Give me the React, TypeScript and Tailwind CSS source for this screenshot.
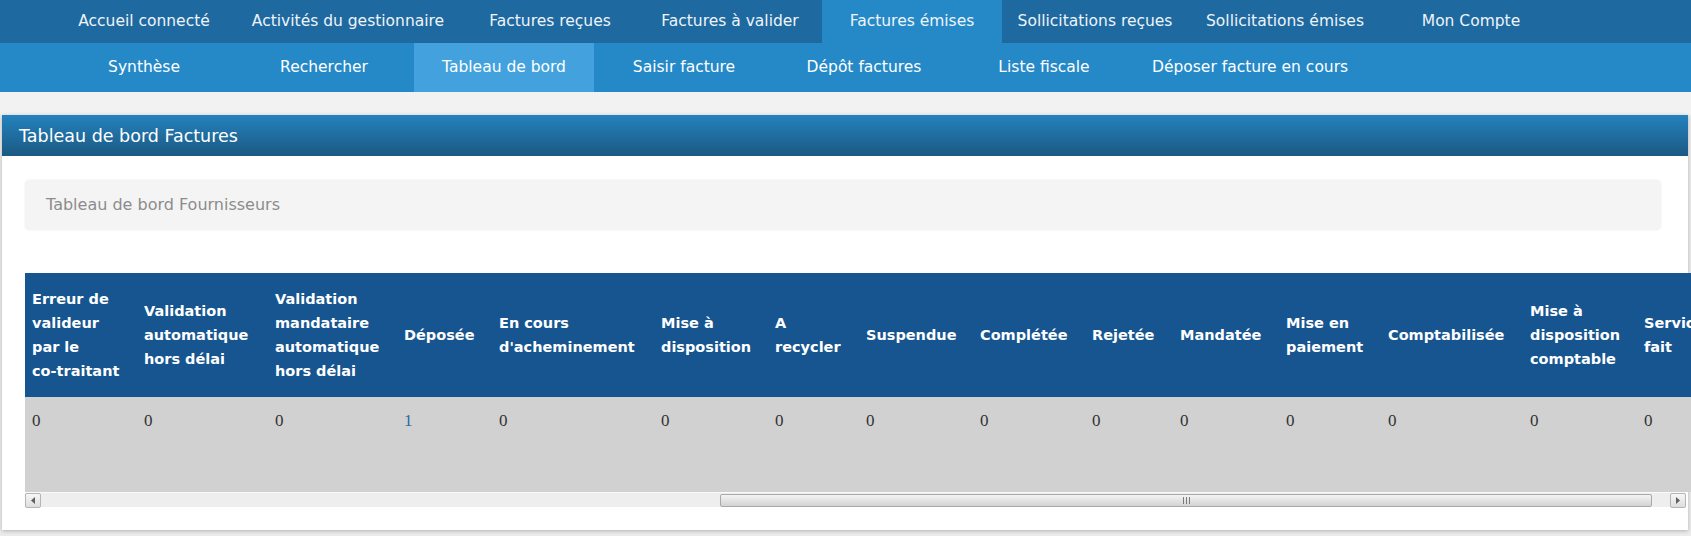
import React from 'react';

const topItems = [
  { label: 'Accueil connecté', w: 'w-[180px]' },
  { label: 'Activités du gestionnaire', w: 'w-[228px]' },
  { label: 'Factures reçues', w: 'w-[176px]' },
  { label: 'Factures à valider', w: 'w-[184px]' },
  { label: 'Factures émises', w: 'w-[180px]', active: true },
  { label: 'Sollicitations reçues', w: 'w-[186px]' },
  { label: 'Sollicitations émises', w: 'w-[194px]' },
  { label: 'Mon Compte', w: 'w-[178px]' },
];

const subItems = [
  { label: 'Synthèse', w: 'w-[180px]' },
  { label: 'Rechercher', w: 'w-[180px]' },
  { label: 'Tableau de bord', w: 'w-[180px]', active: true },
  { label: 'Saisir facture', w: 'w-[180px]' },
  { label: 'Dépôt factures', w: 'w-[180px]' },
  { label: 'Liste fiscale', w: 'w-[180px]' },
  { label: 'Déposer facture en cours', w: 'px-[18px]' },
];

// header lines are broken by hand so they wrap like the original page
const columns = [
  { lines: ['Erreur de', 'valideur', 'par le', 'co-traitant'], w: 'w-[112px]', value: '0' },
  { lines: ['Validation', 'automatique', 'hors délai'], w: 'w-[131px]', value: '0' },
  { lines: ['Validation', 'mandataire', 'automatique', 'hors délai'], w: 'w-[129px]', value: '0' },
  { lines: ['Déposée'], w: 'w-[95px]', value: '1', link: true },
  { lines: ['En cours', "d'acheminement"], w: 'w-[162px]', value: '0' },
  { lines: ['Mise à', 'disposition'], w: 'w-[114px]', value: '0' },
  { lines: ['A', 'recycler'], w: 'w-[91px]', value: '0' },
  { lines: ['Suspendue'], w: 'w-[114px]', value: '0' },
  { lines: ['Complétée'], w: 'w-[112px]', value: '0' },
  { lines: ['Rejetée'], w: 'w-[88px]', value: '0' },
  { lines: ['Mandatée'], w: 'w-[106px]', value: '0' },
  { lines: ['Mise en', 'paiement'], w: 'w-[102px]', value: '0' },
  { lines: ['Comptabilisée'], w: 'w-[142px]', value: '0' },
  { lines: ['Mise à', 'disposition', 'comptable'], w: 'w-[114px]', value: '0' },
  { lines: ['Service', 'fait'], w: 'w-[110px]', value: '0' },
];

function ScrollArrow({ dir }: { dir: 'left' | 'right' }) {
  return (
    <div className="w-[16px] h-[15px] shrink-0 border border-[#b5b5b5] bg-gradient-to-b from-[#f7f7f7] to-[#dedede] rounded-[2px] flex items-center justify-center">
      <svg width="4" height="7" viewBox="0 0 4 7">
        {dir === 'left' ? <path d="M4 0 L0 3.5 L4 7 Z" fill="#606060" /> : <path d="M0 0 L4 3.5 L0 7 Z" fill="#606060" />}
      </svg>
    </div>
  );
}

export default function App() {
  return (
    <div className="w-full h-[536px] overflow-hidden bg-[#ececec] font-['DejaVu_Sans',sans-serif]">
      <nav className="h-[43px] bg-[#1e69a0] flex pl-[54px]">
        {topItems.map((item) => (
          <div
            key={item.label}
            className={`${item.w} shrink-0 h-full flex items-center justify-center whitespace-nowrap text-[15.5px] text-[#eef4f9] ${item.active ? 'bg-[#2589c8]' : ''}`}
          >
            {item.label}
          </div>
        ))}
      </nav>
      <nav className="h-[49px] bg-[#2589c8] flex pl-[54px]">
        {subItems.map((item) => (
          <div
            key={item.label}
            className={`${item.w} shrink-0 h-full flex items-center justify-center whitespace-nowrap text-[15.5px] text-white ${item.active ? 'bg-[#43a2de]' : ''}`}
          >
            {item.label}
          </div>
        ))}
      </nav>

      <div className="h-[23px] bg-[#f2f2f2]" />

      <section className="ml-[2px] mr-[3px] bg-white shadow-[0_1px_4px_rgba(0,0,0,0.25)]">
        <div className="h-[41px] bg-gradient-to-b from-[#2482be] to-[#1b5983] flex items-center pl-[17px] pt-[2px] text-[17.5px] text-white">
          Tableau de bord Factures
        </div>
        <div className="pl-[23px] pr-[2px] pt-[24px] pb-[23px]">
          <div className="mr-[25px] h-[50px] rounded-[5px] bg-[#f4f4f4] shadow-[0_0_2px_rgba(0,0,0,0.1)] flex items-center pl-[21px] text-[16px] text-[#8c8c8c]">
            Tableau de bord Fournisseurs
          </div>

          <div className="mt-[43px]">
            <table className="table-fixed border-collapse w-[1722px]">
              <thead>
                <tr className="h-[124px] bg-[#16558f]">
                  {columns.map((c, i) => (
                    <th
                      key={i}
                      className={`${c.w} pl-[7px] pr-[4px] text-left align-middle font-bold text-[14.5px] leading-[24px] text-white whitespace-nowrap`}
                    >
                      {c.lines.map((l, j) => (
                        <div key={j}>{l}</div>
                      ))}
                    </th>
                  ))}
                </tr>
              </thead>
              <tbody>
                <tr className="h-[95px] bg-[#d1d1d1]">
                  {columns.map((c, i) => (
                    <td
                      key={i}
                      className={`pl-[7px] pt-[12px] align-top font-['Liberation_Serif',serif] text-[17px] leading-[24px] ${c.link ? 'text-[#2b6aa3]' : 'text-[#333333]'}`}
                    >
                      {c.value}
                    </td>
                  ))}
                </tr>
              </tbody>
            </table>

            <div className="h-[15px] flex items-center bg-[#eeeeee] border-t border-[#fafafa]">
              <ScrollArrow dir="left" />
              <div className="flex-1 h-full flex items-center pl-[679px] pr-[18px]">
                <div className="flex-1 h-[13px] rounded-[2px] border border-[#a9a9a9] bg-gradient-to-b from-[#f4f4f4] to-[#d3d3d3] flex items-center justify-center">
                  <svg width="7" height="7" viewBox="0 0 7 7">
                    <path d="M0.5 0 V7 M3.5 0 V7 M6.5 0 V7" stroke="#7a7a7a" strokeWidth="1" />
                  </svg>
                </div>
              </div>
              <ScrollArrow dir="right" />
            </div>
          </div>
        </div>
      </section>
    </div>
  );
}
